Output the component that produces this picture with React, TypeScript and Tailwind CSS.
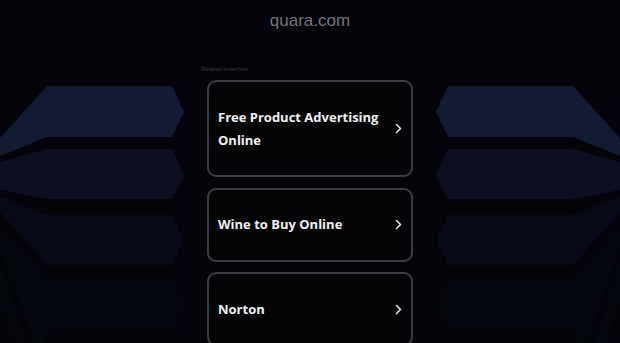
import * as React from 'react';

const searches = ['Free Product Advertising Online', 'Wine to Buy Online', 'Norton'];

const leftShapes: { points: string; fill: string }[] = [
    { points: '47,86 172,86 184,112 172,137 47,137 0,156 0,138', fill: '#131a33' },
    { points: '47,149 172,149 184,175 172,199 47,199 0,190 0,162', fill: '#0c1022' },
    { points: '47,215 172,215 184,240 172,265 47,265 0,212 0,196', fill: '#080a18' },
    { points: '47,280 172,280 184,305 172,330 47,330 44,343 34,343 0,248 0,226', fill: '#05070f' },
    { points: '0,262 26,343 14,343 0,300', fill: '#05070f' },
];

const mirror = (points: string) =>
    points
        .split(' ')
        .map(p => {
            const [x, y] = p.split(',').map(Number);
            return `${620 - x},${y}`;
        })
        .join(' ');

const Backdrop: React.FC = () => (
    <svg className="absolute inset-0 h-full w-full" viewBox="0 0 620 343" preserveAspectRatio="none">
        {leftShapes.map((s, i) => (
            <React.Fragment key={i}>
                <polygon points={s.points} fill={s.fill} />
                <polygon points={mirror(s.points)} fill={s.fill} />
            </React.Fragment>
        ))}
    </svg>
);

const Chevron: React.FC = () => (
    <svg width="7" height="11" viewBox="0 0 7 11" className="shrink-0">
        <path d="M1.5 1.5 L5.5 5.5 L1.5 9.5" fill="none" stroke="#e8e8ec" strokeWidth="1.6" strokeLinecap="round" strokeLinejoin="round" />
    </svg>
);

export default function App() {
    return (
        <div className="relative h-[343px] w-[620px] overflow-hidden bg-[#04040a]">
            <Backdrop />
            <div className="relative flex flex-col items-center">
                <div className="pt-[9px] text-[17px] leading-[24px] text-[#75757b]" style={{ fontFamily: '"Liberation Sans", Arial, sans-serif' }}>
                    quara.com
                </div>
                <div className="mt-[32px] w-[220px]">
                    <div className="pl-px text-[6px] leading-[8px] text-[#3a3a42]" style={{ fontFamily: '"Liberation Sans", Arial, sans-serif' }}>
                        Related searches
                    </div>
                    <div className="mt-[7px] flex flex-col gap-[10.5px] px-[7px]">
                        {searches.map(s => (
                            <a
                                key={s}
                                href="#"
                                className="flex items-center justify-between gap-2 rounded-[9px] border-2 border-[#3c3c42] bg-[#050508] py-[23.5px] pl-[9px] pr-[9px] text-[13px] font-bold leading-[23px] text-[#f2f2f4]"
                                style={{ fontFamily: '"Open Sans", "DejaVu Sans", sans-serif' }}
                            >
                                <span>{s}</span>
                                <Chevron />
                            </a>
                        ))}
                    </div>
                </div>
            </div>
        </div>
    );
}
